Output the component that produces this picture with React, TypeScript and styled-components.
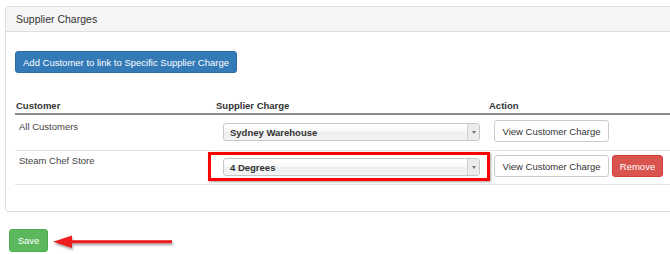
import styled, { createGlobalStyle } from 'styled-components';

const GlobalStyle = createGlobalStyle`
  html, body {
    margin: 0;
    padding: 0;
    background: #ffffff;
    overflow: hidden;
  }
  body {
    font-family: "Liberation Sans", Arial, sans-serif;
    color: #333333;
  }
`;

interface Charge {
  customer: string;
  charge: string;
  removable?: boolean;
  highlighted?: boolean;
}

const charges: Charge[] = [
  { customer: 'All Customers', charge: 'Sydney Warehouse' },
  { customer: 'Steam Chef Store', charge: '4 Degrees', removable: true, highlighted: true },
];

const Select = ({ value }: { value: string }) => (
  <SelectBox>
    <SelectValue>{value}</SelectValue>
    <SelectArrow>
      <Caret />
    </SelectArrow>
  </SelectBox>
);

const App = () => {
  return (
    <>
      <GlobalStyle />
      <Panel>
        <PanelHeading>Supplier Charges</PanelHeading>
        <PanelBody>
          <PrimaryButton>Add Customer to link to Specific Supplier Charge</PrimaryButton>
          <Table>
            <HeadRow>
              <HeadCell>Customer</HeadCell>
              <HeadCell>Supplier Charge</HeadCell>
              <HeadCell>Action</HeadCell>
            </HeadRow>
            {charges.map((item) => (
              <Row key={item.customer} $compact={item.highlighted}>
                <NameCell $compact={item.highlighted}>{item.customer}</NameCell>
                <ChargeCell $compact={item.highlighted}>
                  {item.highlighted ? (
                    <Highlight>
                      <Select value={item.charge} />
                    </Highlight>
                  ) : (
                    <Select value={item.charge} />
                  )}
                </ChargeCell>
                <ActionCell $compact={item.highlighted}>
                  <DefaultButton>View Customer Charge</DefaultButton>
                  {item.removable && <DangerButton>Remove</DangerButton>}
                </ActionCell>
              </Row>
            ))}
          </Table>
        </PanelBody>
      </Panel>
      <Footer>
        <SaveButton>Save</SaveButton>
        <Arrow width="124" height="24" viewBox="0 0 124 24">
          <polygon points="1,12.7 20,6.5 20,19" fill="#ee1c1c" />
          <rect x="19" y="11.2" width="101" height="3" fill="#ee1c1c" />
        </Arrow>
      </Footer>
    </>
  );
};

export default App;

const Panel = styled.div`
  margin: 6px 0 0 5px;
  width: 690px;
  border: 1px solid #dddddd;
  border-radius: 4px;
  background: #ffffff;
`;

const PanelHeading = styled.div`
  height: 24px;
  padding-left: 10px;
  display: flex;
  align-items: center;

  background: #f5f5f5;
  border-bottom: 1px solid #dddddd;
  border-radius: 4px 4px 0 0;

  font-size: 10.5px;
  color: #333333;
`;

const PanelBody = styled.div`
  padding: 19px 0 26px 9px;
`;

const BaseButton = styled.button`
  display: inline-flex;
  align-items: center;
  justify-content: center;
  box-sizing: border-box;

  height: 22px;
  padding: 0;
  border-radius: 3px;

  font-family: "Liberation Sans", Arial, sans-serif;
  font-size: 9.5px;
  white-space: nowrap;
  cursor: pointer;
`;

const PrimaryButton = styled(BaseButton)`
  width: 222px;
  background: #337ab7;
  border: 1px solid #2e6da4;
  color: #ffffff;
`;

const DefaultButton = styled(BaseButton)`
  width: 115px;
  background: #ffffff;
  border: 1px solid #cccccc;
  color: #333333;
`;

const DangerButton = styled(BaseButton)`
  width: 51px;
  background: #d9534f;
  border: 1px solid #d43f3a;
  color: #ffffff;
`;

const SaveButton = styled(BaseButton)`
  width: 39px;
  height: 23px;
  background: #5cb85c;
  border: 1px solid #4cae4c;
  color: #ffffff;
`;

const Table = styled.div`
  margin-top: 26px;
  display: flex;
  flex-direction: column;
`;

const columns = `
  display: grid;
  grid-template-columns: 200px 273px 1fr;
`;

const HeadRow = styled.div`
  ${columns}
  height: 14px;
  border-bottom: 2px solid #8c8c8c;
`;

const HeadCell = styled.div`
  padding-left: 1px;
  font-size: 9.5px;
  font-weight: 700;
  line-height: 14px;
  color: #333333;
`;

const Row = styled.div<{ $compact?: boolean }>`
  ${columns}
  height: ${({ $compact }) => ($compact ? '33px' : '35px')};
  border-bottom: 1px solid #e2e2e2;
`;

const NameCell = styled.div<{ $compact?: boolean }>`
  padding: ${({ $compact }) => ($compact ? '3px' : '5px')} 0 0 4px;
  font-size: 9.5px;
  line-height: 13px;
  color: #444444;
`;

const ChargeCell = styled.div<{ $compact?: boolean }>`
  padding: ${({ $compact }) => ($compact ? '1px' : '8px')} 0 0 8px;
`;

const ActionCell = styled.div<{ $compact?: boolean }>`
  display: flex;
  align-items: flex-start;
  gap: 3px;
  padding: ${({ $compact }) => ($compact ? '4px' : '5px')} 0 0 6px;
`;

const Highlight = styled.div`
  width: 257px;
  margin-left: -15px;
  padding: 3px 7px 2px 12px;
  border: 3px solid #ff0000;
  box-shadow: 1px 1px 2px rgba(0, 0, 0, 0.35);
`;

const SelectBox = styled.div`
  display: flex;
  width: 257px;
  height: 18px;
  box-sizing: border-box;

  border: 1px solid #c6c6c6;
  border-radius: 3px;
  background: linear-gradient(#ffffff 20%, #f6f6f6 50%, #eeeeee 52%, #f4f4f4 100%);
  overflow: hidden;
`;

const SelectValue = styled.div`
  flex: 1;
  display: flex;
  align-items: center;
  padding-left: 6px;

  font-size: 9.5px;
  font-weight: 700;
  color: #333333;
`;

const SelectArrow = styled.div`
  display: flex;
  align-items: center;
  justify-content: center;
  width: 11px;

  border-left: 1px solid #d0d0d0;
  background: #ececec;
`;

const Caret = styled.span`
  width: 0;
  height: 0;
  border-left: 2px solid transparent;
  border-right: 2px solid transparent;
  border-top: 3px solid #777777;
`;

const Footer = styled.div`
  display: flex;
  align-items: flex-start;
  gap: 4px;
  margin-top: 17px;
  padding-left: 9px;
`;

const Arrow = styled.svg`
  display: block;
  filter: drop-shadow(1px 2px 1px rgba(0, 0, 0, 0.35));
`;
